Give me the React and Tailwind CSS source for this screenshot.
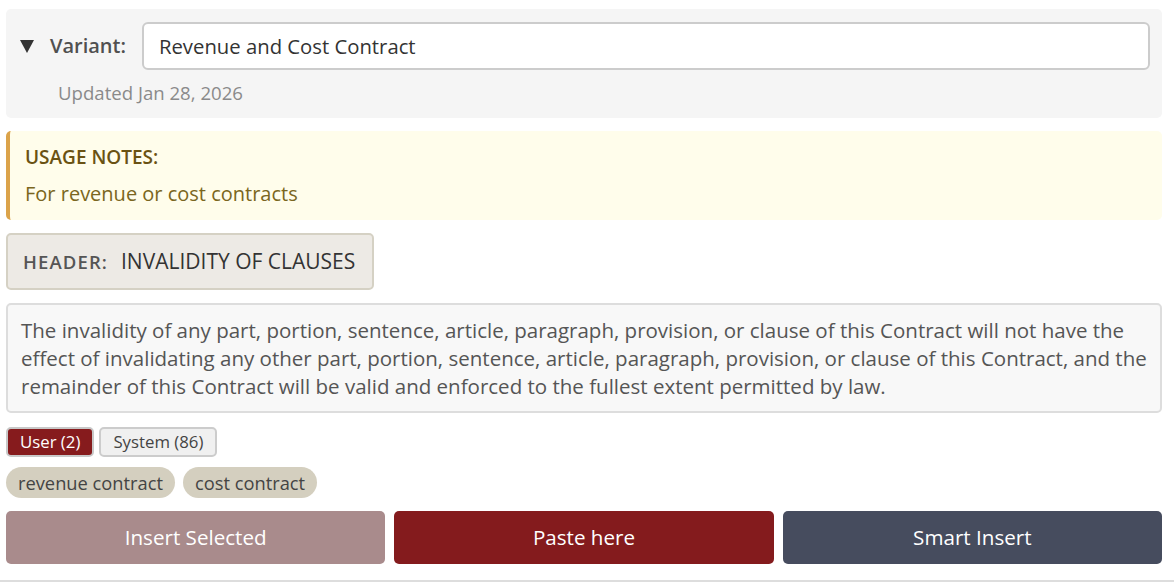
export default function App() {
  const font = { fontFamily: '"Segoe UI", "Open Sans", "Noto Sans", sans-serif' }
  return (
    <div className="min-h-[582px] bg-white border-b-2 border-[#dddddd]" style={font}>
      <div className="pl-[6px] pr-[12px] pt-[9px] flex flex-col">
        {/* variant panel */}
        <div className="bg-[#f5f5f5] rounded-[5px] pl-[14px] pr-[12px] pt-[13px] pb-[12px]">
          <div className="flex items-center">
            <svg width="14" height="13" viewBox="0 0 14 13" className="mr-[16px]">
              <polygon points="0,0 14,0 7,13" fill="#333" />
            </svg>
            <span className="font-semibold text-[20px] text-[#505050] mr-[16px]">Variant:</span>
            <div className="flex-1 h-[48px] bg-white border-2 border-[#cccccc] rounded-[6px] flex items-center px-[15px] text-[20.3px] text-[#333]">
              Revenue and Cost Contract
            </div>
          </div>
          <div className="pl-[38px] mt-[10px] text-[18.6px] text-[#8a8a8a] leading-[26px]">Updated Jan 28, 2026</div>
        </div>

        {/* usage notes */}
        <div className="mt-[13px] bg-[#fffdeb] border-l-4 border-[#dba34a] rounded-[5px] pl-[15px] pt-[12px] pb-[12px]">
          <div className="font-semibold text-[19px] text-[#6a5213] leading-[28px]">USAGE NOTES:</div>
          <div className="text-[20px] text-[#7a6620] mt-[9px] leading-[28px]">For revenue or cost contracts</div>
        </div>

        {/* header */}
        <div className="mt-[13px] self-start bg-[#edeae5] border-2 border-[#d5d1c4] rounded-[5px] h-[57px] pl-[15px] pr-[17px] flex items-center">
          <span className="font-semibold text-[18.5px] tracking-[0.06em] text-[#555]">HEADER:</span>
          <span className="ml-[13px] text-[21px] text-[#333]">INVALIDITY OF CLAUSES</span>
        </div>

        {/* body */}
        <div className="mt-[13px] bg-[#f8f8f8] border-2 border-[#dddddd] rounded-[5px] px-[13px] py-[11px] text-[20.5px] leading-[28px] text-[#555]">
          The invalidity of any part, portion, sentence, article, paragraph, provision, or clause of this Contract will not have the
          <br />
          effect of invalidating any other part, portion, sentence, article, paragraph, provision, or clause of this Contract, and the
          <br />
          remainder of this Contract will be valid and enforced to the fullest extent permitted by law.
        </div>

        {/* tabs */}
        <div className="mt-[14px] flex gap-[5px]">
          <button className="h-[30px] px-[12px] bg-[#861b1d] border-2 border-[#c8c8c8] rounded-[5px] text-white text-[16.8px]">User (2)</button>
          <button className="h-[30px] px-[12px] bg-[#f0f0f0] border-2 border-[#cccccc] rounded-[5px] text-[#444] text-[16.8px]">System (86)</button>
        </div>

        {/* tags */}
        <div className="mt-[10px] flex gap-[8px]">
          <span className="h-[31px] px-[12px] bg-[#d4cfbf] rounded-full text-[18.3px] text-[#444] flex items-center">revenue contract</span>
          <span className="h-[31px] px-[12px] bg-[#d4cfbf] rounded-full text-[18.3px] text-[#444] flex items-center">cost contract</span>
        </div>

        {/* actions */}
        <div className="mt-[13px] grid grid-cols-3 gap-[9px]">
          <button className="h-[53px] bg-[#a98b8c] rounded-[5px] text-white text-[20.6px]">Insert Selected</button>
          <button className="h-[53px] bg-[#841b1d] rounded-[5px] text-white text-[20.6px]">Paste here</button>
          <button className="h-[53px] bg-[#464c5e] rounded-[5px] text-white text-[20.6px]">Smart Insert</button>
        </div>
      </div>
    </div>
  )
}
